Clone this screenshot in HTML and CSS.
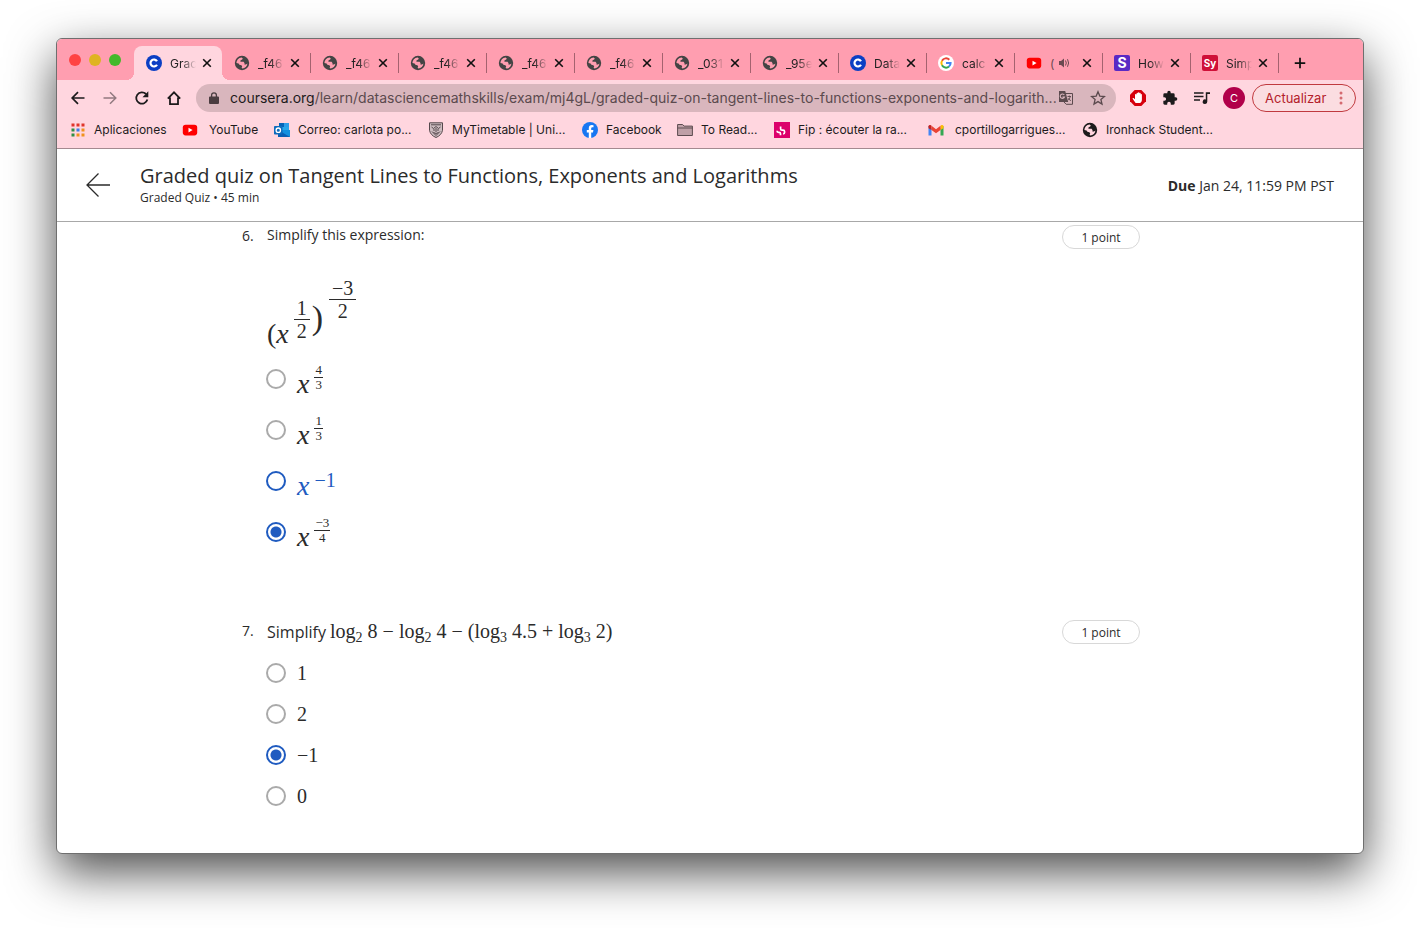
FILE: index.html
```html
<!DOCTYPE html>
<html lang="en">
<head>
<meta charset="utf-8">
<title>Graded quiz on Tangent Lines</title>
<link rel="stylesheet" href="styles.css">
</head>
<body>
<svg class="sprite" aria-hidden="true">
  <symbol id="globe" viewBox="0 0 16 16"><circle cx="8" cy="8" r="7.2" fill="currentColor"/><path d="M2.400 8C2.500 5 4.600 2.700 7.600 2.400L8.800 3.400 8.200 4.600 6.600 5.200 6.400 6.800H9.600L10.600 8.200 10.400 9.400 12 9.600 13.400 8.600C13.200 11.400 11 13.500 8.400 13.600L7.600 12.800 8.200 11.400 7.400 10.200 5.400 9.800 4.600 8.600z" fill="var(--hole)"/></symbol>
  <symbol id="coursera" viewBox="0 0 16 16"><circle cx="8" cy="8" r="8" fill="#0b3fc4"/><path d="M11 6.200A3.500 3.500 0 1 0 11 9.800" fill="none" stroke="#fff" stroke-width="2.200"/></symbol>
  <symbol id="youtube" viewBox="0 0 16 16"><rect x=".8" y="2.800" width="14.400" height="10.600" rx="2.800" fill="#f00"/><path d="M6.500 5.700v4.800L10.600 8.100z" fill="#fff"/></symbol>
  <symbol id="close" viewBox="0 0 16 16"><path d="M4.200 4.200l7.600 7.600M11.800 4.200l-7.600 7.600" stroke="currentColor" stroke-width="1.600"/></symbol>
</svg>
<div class="window">
  <div class="tabstrip">
    <div class="lights"><button class="light red" aria-label="Close window"></button><button class="light yellow" aria-label="Minimize"></button><button class="light green" aria-label="Zoom"></button></div>
    <div class="tab active"><svg class="ico"><use href="#coursera"/></svg><span class="label">Grac</span><button class="x" aria-label="Close tab"><svg class="ico"><use href="#close"/></svg></button></div>
    <div class="tab"><svg class="ico"><use href="#globe"/></svg><span class="label">_f46</span><button class="x" aria-label="Close tab"><svg class="ico"><use href="#close"/></svg></button></div>
    <div class="tab"><svg class="ico"><use href="#globe"/></svg><span class="label">_f46</span><button class="x" aria-label="Close tab"><svg class="ico"><use href="#close"/></svg></button></div>
    <div class="tab"><svg class="ico"><use href="#globe"/></svg><span class="label">_f46</span><button class="x" aria-label="Close tab"><svg class="ico"><use href="#close"/></svg></button></div>
    <div class="tab"><svg class="ico"><use href="#globe"/></svg><span class="label">_f46</span><button class="x" aria-label="Close tab"><svg class="ico"><use href="#close"/></svg></button></div>
    <div class="tab"><svg class="ico"><use href="#globe"/></svg><span class="label">_f46</span><button class="x" aria-label="Close tab"><svg class="ico"><use href="#close"/></svg></button></div>
    <div class="tab"><svg class="ico"><use href="#globe"/></svg><span class="label">_031</span><button class="x" aria-label="Close tab"><svg class="ico"><use href="#close"/></svg></button></div>
    <div class="tab"><svg class="ico"><use href="#globe"/></svg><span class="label">_95e</span><button class="x" aria-label="Close tab"><svg class="ico"><use href="#close"/></svg></button></div>
    <div class="tab"><svg class="ico"><use href="#coursera"/></svg><span class="label">Data</span><button class="x" aria-label="Close tab"><svg class="ico"><use href="#close"/></svg></button></div>
    <div class="tab"><svg class="ico" viewBox="0 0 16 16"><circle cx="8" cy="8" r="8" fill="#fff"/><g fill="none" stroke-width="2"><path d="M11.300 4.700A4.600 4.600 0 0 0 4 5.700" stroke="#ea4335"/><path d="M4 5.700a4.600 4.600 0 0 0 0 4.600" stroke="#fbbc05"/><path d="M4 10.300a4.600 4.600 0 0 0 7 1.200" stroke="#34a853"/><path d="M11 11.500A4.500 4.500 0 0 0 12.600 8H8" stroke="#4285f4"/></g></svg><span class="label">calc</span><button class="x" aria-label="Close tab"><svg class="ico"><use href="#close"/></svg></button></div>
    <div class="tab"><svg class="ico"><use href="#youtube"/></svg><span class="label audible"><span>(</span><svg class="sound" viewBox="0 0 12 12" fill="currentColor"><path d="M1 4h2l3-2.600v9.200L3 8H1z"/><path d="M7.500 3.500q1.600 2.500 0 5M9.500 2.200q2.200 3.800 0 7.600" fill="none" stroke="currentColor"/></svg></span><button class="x" aria-label="Close tab"><svg class="ico"><use href="#close"/></svg></button></div>
    <div class="tab"><span class="ico badge purple">S</span><span class="label">How</span><button class="x" aria-label="Close tab"><svg class="ico"><use href="#close"/></svg></button></div>
    <div class="tab"><span class="ico badge crimson">Sy</span><span class="label">Simp</span><button class="x" aria-label="Close tab"><svg class="ico"><use href="#close"/></svg></button></div>
    <button class="newtab" aria-label="New tab"><svg class="ico" viewBox="0 0 16 16"><path d="M8 2v12M2 8h12" stroke="currentColor" stroke-width="2"/></svg></button>
  </div>

  <div class="toolbar">
    <button class="tool" aria-label="Back"><svg class="ico" viewBox="0 0 16 16"><path d="M14.500 8H2.500M8 2.200L2.200 8 8 13.800" fill="none" stroke="currentColor" stroke-width="1.700"/></svg></button>
    <button class="tool dim" aria-label="Forward"><svg class="ico" viewBox="0 0 16 16"><path d="M1.500 8h12M8 2.200L13.800 8 8 13.800" fill="none" stroke="currentColor" stroke-width="1.500"/></svg></button>
    <button class="tool" aria-label="Reload"><svg class="ico" viewBox="0 0 16 16"><path d="M13.400 9.600A5.700 5.700 0 1 1 12 4" fill="none" stroke="currentColor" stroke-width="1.800"/><path d="M14.300 1.200v6H8.500z" fill="currentColor"/></svg></button>
    <button class="tool" aria-label="Home"><svg class="ico" viewBox="0 0 16 16"><path d="M1.800 8.600L8 2.300l6.200 6.300M4 7.500v6.600h8V7.500" fill="none" stroke="currentColor" stroke-width="1.800"/></svg></button>
    <label class="omnibox">
      <svg class="lock" viewBox="0 0 10 12"><path d="M1 4.500h8a1 1 0 0 1 1 1V11a1 1 0 0 1-1 1H1a1 1 0 0 1-1-1V5.500a1 1 0 0 1 1-1z" fill="currentColor"/><path d="M2.600 5V3.200a2.400 2.400 0 0 1 4.800 0V5" fill="none" stroke="currentColor" stroke-width="1.300"/></svg>
      <span class="host">coursera.org</span>
      <input class="path" type="text" aria-label="Address" value="/learn/datasciencemathskills/exam/mj4gL/graded-quiz-on-tangent-lines-to-functions-exponents-and-logarith...">
      <button class="tool" aria-label="Translate"><svg class="ico" viewBox="0 0 16 16"><path d="M7 3.500h7.500v10.800H8.200L6 12" fill="none" stroke="currentColor"/><path d="M1 1h6.200l3 11H1z" fill="currentColor"/><path d="M6.300 5A2.200 2.200 0 1 0 6.500 7H4.500" fill="none" stroke="var(--url)" stroke-width="1.100"/><path d="M9.500 6.500H13M11.300 5.500v1M12.300 6.500q-.3 2-2.300 3.800M10.500 8l2.200 3" stroke="currentColor" fill="none" stroke-width=".9"/></svg></button>
      <button class="tool" aria-label="Bookmark"><svg class="ico" viewBox="0 0 16 16"><path d="M8 1.800l1.800 4.300 4.700.4-3.600 3 1.100 4.600L8 11.600l-4 2.500 1.100-4.600-3.600-3 4.700-.4z" fill="none" stroke="currentColor" stroke-width="1.300"/></svg></button>
    </label>
    <button class="tool" aria-label="Ad blocker"><svg class="ico" viewBox="0 0 16 16"><path d="M4.700 0h6.600L16 4.700v6.600L11.300 16H4.700L0 11.300V4.700z" fill="#d6000d"/><path d="M5 4.500v4.800L3.800 8.200c-.8-.5-1.500.2-1 .9L5.600 13h4.600c1.300-1 1.700-2 1.700-3.500V4.500c0-.8-1.200-.8-1.200 0V3.400c0-.8-1.300-.8-1.300 0v-.6c0-.8-1.400-.8-1.400 0v.6c0-.8-1.400-.8-1.400 0v1.100c0-.8-1.600-.8-1.600 0z" fill="#fff"/></svg></button>
    <button class="tool" aria-label="Extensions"><svg class="ico" viewBox="0 0 24 24"><path d="M20.500 11H19V7a2 2 0 0 0-2-2h-4V3.500a2.500 2.500 0 0 0-5 0V5H4a2 2 0 0 0-2 2v3.800h1.500a2.700 2.700 0 0 1 0 5.400H2V20c0 1.100.9 2 2 2h3.800v-1.500a2.700 2.700 0 0 1 5.400 0V22H17a2 2 0 0 0 2-2v-4h1.500a2.500 2.500 0 0 0 0-5z" fill="currentColor"/></svg></button>
    <button class="tool" aria-label="Media"><svg class="ico" viewBox="0 0 16 16"><path d="M0 3h9.500M0 6.500h9.500M0 10h6" stroke="currentColor" stroke-width="1.500"/><path d="M16 2.200h-4.200v7.300a2.300 2.300 0 1 0 1.500 2.100V4H16z" fill="currentColor"/></svg></button>
    <button class="tool" aria-label="Profile"><span class="avatar">C</span></button>
    <button class="update">Actualizar<svg class="dots" viewBox="0 0 4 14"><circle cx="2" cy="2" r="1.500"/><circle cx="2" cy="7" r="1.500"/><circle cx="2" cy="12" r="1.500"/></svg></button>
  </div>

  <nav class="bookmarks">
    <a href="#"><svg class="ico" viewBox="0 0 16 16"><path d="M1.500 1.500h3v3h-3zM6.500 1.500h3v3h-3zM11.500 1.500h3v3h-3z" fill="#e0352b"/><path d="M1.500 6.500h3v3h-3z" fill="#2f8f46"/><path d="M6.500 6.500h3v3h-3z" fill="#3d7de8"/><path d="M11.500 6.500h3v3h-3zM11.500 11.500h3v3h-3zM6.500 11.500h3v3h-3z" fill="#f0921e"/><path d="M1.500 11.500h3v3h-3z" fill="#2f8f46"/></svg>Aplicaciones</a>
    <a href="#" class="wide"><svg class="ico"><use href="#youtube"/></svg>YouTube</a>
    <a href="#"><svg class="ico" viewBox="0 0 16 16"><path d="M5 1h10v9H5z" fill="#28a8ea"/><path d="M5 1h5v4H5z" fill="#0364b8"/><path d="M10 1h5v4h-5z" fill="#2b9ee8"/><path d="M4 8l12 0v7H4z" fill="#1490df"/><path d="M4 8l12 7H4z" fill="#0a5fb5"/><rect y="4" width="8.500" height="8.500" rx=".8" fill="#0f6cbd"/><circle cx="4.300" cy="8.200" r="2.200" fill="none" stroke="#fff" stroke-width="1.300"/></svg>Correo: carlota po...</a>
    <a href="#"><svg class="ico" viewBox="0 0 16 16"><path d="M1.500.8h13v7.500q-1 5-6.500 7.200Q2.500 13.300 1.500 8.300z" fill="#cdbcc0" stroke="#55484c"/><path d="M3 2.800h10M3.500 5l2 1.500L8 4.500l2.500 2 2-1.500M5 8h2M9 8h2M5.500 10.500q2.500 2 5 0M8 6v4M4 9.500l4 4 4-4" fill="none" stroke="#55484c"/></svg>MyTimetable | Uni...</a>
    <a href="#"><svg class="ico" viewBox="0 0 16 16"><circle cx="8" cy="8" r="8" fill="#1877f2"/><path d="M6.800 16v-5.600h-2V8h2V6.300c0-2 1.200-3.200 3-3.200l1.700.2v2h-1c-1 0-1.300.6-1.300 1.200V8h2.200l-.4 2.400H9.200V16z" fill="#fff"/></svg>Facebook</a>
    <a href="#"><svg class="ico" viewBox="0 0 16 16"><path d="M.6 13.500v-11h5l1.500 1.600h8.300v9.400z" fill="#bfa0a7" stroke="#5c4c50"/><path d="M.6 6h14.800" stroke="#5c4c50"/></svg>To Read...</a>
    <a href="#"><svg class="ico" viewBox="0 0 16 16"><path d="M0 0h16v16H0z" fill="#dc006b"/><path d="M6.600 4.500v2.200q0 1.500 1.500 1.500h1q1.500 0 1.500 1.500v.6q0 1.500-1.500 1.500M3 8.800q0 1.600 1.500 1.600h.6q1.400 0 1.400 1.400v1.500" fill="none" stroke="#fff" stroke-width="1.700"/></svg>Fip : écouter la ra...</a>
    <a href="#" class="wide"><svg class="ico" viewBox="0 0 16 16"><path d="M.5 4v9.500h3V6z" fill="#4285f4"/><path d="M15.500 4v9.500h-3V6z" fill="#34a853"/><path d="M.5 4.200v2L3.500 8V3.800L2.500 3Q.7 2.700.5 4.200z" fill="#c5221f"/><path d="M15.500 4.200v2l-3 1.800V3.800l1-.8q1.800-.3 2 1.200z" fill="#fbbc04"/><path d="M3.500 3.800L8 7.200l4.500-3.400V8L8 11.200 3.500 8z" fill="#ea4335"/></svg>cportillogarrigues...</a>
    <a href="#"><svg class="ico"><use href="#globe"/></svg>Ironhack Student...</a>
  </nav>

  <header class="quizbar">
    <a class="backlink" href="#" aria-label="Back to course"><svg viewBox="0 0 24 24"><path d="M24 12H1M12.500.5L1 12l11.500 11.500" fill="none" stroke="currentColor" stroke-width="1.300"/></svg></a>
    <div class="heading"><h1>Graded quiz on Tangent Lines to Functions, Exponents and Logarithms</h1><p>Graded Quiz • 45 min</p></div>
    <p class="due"><strong>Due</strong> Jan 24, 11:59 PM PST</p>
  </header>

  <main class="quiz">
    <section class="question">
      <span class="num">6.</span>
      <div class="body">
        <p class="prompt">Simplify this expression:</p>
        <div class="expr">
          <span class="paren">(</span><i class="var">x</i><span class="power low"><span class="frac"><span>1</span><span>2</span></span></span><span class="bigparen">)</span><span class="power high"><span class="frac"><span>−3</span><span>2</span></span></span>
        </div>
        <div class="options tall">
          <label><input type="radio" name="q6"><span class="pow"><i class="var">x</i><span class="frac small"><span>4</span><span>3</span></span></span></label>
          <label><input type="radio" name="q6"><span class="pow"><i class="var">x</i><span class="frac small"><span>1</span><span>3</span></span></span></label>
          <label class="focus"><input type="radio" name="q6"><span class="pow"><i class="var">x</i><span class="exp">−1</span></span></label>
          <label><input type="radio" name="q6" checked><span class="pow"><i class="var">x</i><span class="frac small"><span>−3</span><span>4</span></span></span></label>
        </div>
      </div>
      <span class="points">1 point</span>
    </section>
    <section class="question">
      <span class="num">7.</span>
      <div class="body">
        <p class="prompt large">Simplify <span class="math">log<sub>2</sub> 8 − log<sub>2</sub> 4 − (log<sub>3</sub> 4.5 + log<sub>3</sub> 2)</span></p>
        <div class="options">
          <label><input type="radio" name="q7"><span class="math">1</span></label>
          <label><input type="radio" name="q7"><span class="math">2</span></label>
          <label><input type="radio" name="q7" checked><span class="math">−1</span></label>
          <label><input type="radio" name="q7"><span class="math">0</span></label>
        </div>
      </div>
      <span class="points">1 point</span>
    </section>
  </main>
</div>
</body>
</html>
```
FILE: styles.css
```css
* { box-sizing: border-box; }
:root { --strip: #ff9eb0; --bar: #ffd6df; --url: #d9b6bd; --blue: #1f5bc0; }
body { margin: 0; min-height: 100vh; padding: 38px 56px 74px; display: flex; flex-direction: column; background: #fff; font-family: Inter, "Liberation Sans", sans-serif; }
button { border: 0; padding: 0; margin: 0; background: none; color: inherit; font: inherit; }
p, h1 { margin: 0; }
.sprite { display: none; }
.ico { display: block; width: 16px; height: 16px; flex: none; }

.window { flex: 1; border: 1px solid #6f6f6f; border-radius: 6px; overflow: hidden; background: #fff; box-shadow: 0 18px 48px rgba(0,0,0,.7); }

.tabstrip { display: flex; align-items: flex-end; height: 41px; background: var(--strip); color: #111; --hole: var(--strip); }
.lights { display: flex; gap: 8px; width: 77px; height: 41px; padding: 0 0 0 12px; align-items: center; }
.light { width: 12px; height: 12px; border-radius: 50%; }
.red { background: #ff4343; }
.yellow { background: #dfb423; }
.green { background: #43b929; }
.tab { position: relative; display: flex; align-items: center; width: 88px; height: 34px; padding-left: 12px; color: #444; font-size: 12px; }
.tab + .tab:not(.active)::after { content: ""; position: absolute; right: -1px; top: 7px; width: 1px; height: 20px; background: #a5626f; }
.tab.active { background: var(--bar); border-radius: 8px 8px 0 0; }
.tab.active::before, .tab.active::after { content: ""; position: absolute; bottom: 0; width: 8px; height: 8px; }
.tab.active::before { left: -8px; background: radial-gradient(circle at 0 0, transparent 8px, var(--bar) 8px); }
.tab.active::after { right: -8px; background: radial-gradient(circle at 100% 0, transparent 8px, var(--bar) 8px); }
.label { width: 29px; margin-left: 8px; overflow: hidden; white-space: nowrap; color: #222; -webkit-mask-image: linear-gradient(90deg, #000 12px, transparent 26px); mask-image: linear-gradient(90deg, #000 12px, transparent 26px); }
.label.audible { display: flex; align-items: center; gap: 4px; -webkit-mask-image: none; mask-image: none; color: #6b4a51; }
.sound { width: 12px; height: 12px; }
.x { color: #111; }
.badge { border-radius: 2px; color: #fff; font-weight: 700; text-align: center; line-height: 16px; }
.purple { background: #5a2ac4; font-size: 14px; }
.crimson { background: #cf1038; font-size: 10px; }
.newtab { width: 44px; height: 34px; display: grid; place-items: center; }
.newtab .ico { width: 14px; height: 14px; }

.toolbar { display: flex; align-items: center; height: 35px; padding: 0 7px 0 5px; background: var(--bar); color: #1d1b1c; }
.tool { width: 32px; height: 28px; display: grid; place-items: center; flex: none; }
.dim { color: #927a80; }
.omnibox { flex: 1; display: flex; align-items: center; min-width: 0; height: 28px; margin: 0 6px; padding: 0 8px 0 13px; border-radius: 14px; background: var(--url); color: #5b4a4e; font-size: 14px; }
.omnibox .tool { width: 20px; color: #5b4a4e; }
.omnibox .tool + .tool { margin-left: 12px; }
.lock { width: 10px; height: 12px; margin-right: 11px; color: #4b3d41; }
.host { color: #1d1b1c; }
.path { flex: 1; min-width: 0; padding: 0; border: 0; outline: 0; background: none; color: inherit; font: inherit; }
.avatar { width: 22px; height: 22px; border-radius: 50%; background: #b1004a; color: #fff; font-size: 11px; line-height: 22px; text-align: center; }
.update { display: flex; align-items: center; justify-content: space-between; width: 104px; height: 28px; margin-left: 2px; padding: 0 12px; border: 1px solid #c03a3f; border-radius: 14px; background: #fbdde1; color: #b3202a; font-size: 13px; }
.dots { width: 4px; height: 14px; fill: #d56a70; }

.bookmarks { display: grid; grid-template-columns: 112px 92px 154px 154px 95px 97px 154px 154px auto; align-items: center; height: 34px; padding: 0 0 4px 13px; border-bottom: 1px solid #a58a90; background: var(--bar); --hole: var(--bar); }
.bookmarks a { display: flex; align-items: center; gap: 8px; color: #1d1b1c; font-size: 12px; text-decoration: none; white-space: nowrap; }
.bookmarks a.wide { gap: 11px; }

.quizbar { display: flex; align-items: center; height: 73px; padding: 0 29px; border-bottom: 1px solid #a8a8a8; color: #2b2b2b; font-family: "Open Sans", sans-serif; }
.backlink { width: 24px; height: 24px; margin-right: 30px; color: #2b2b2b; }
.backlink svg { display: block; }
.heading { flex: 1; }
h1 { font-size: 20px; font-weight: 400; line-height: 26px; }
.heading p { font-size: 12px; line-height: 18px; }
.due { font-size: 14px; }

.quiz { padding: 0 223px 32px 185px; color: #2b2b2b; font-family: "Open Sans", sans-serif; }
.question { display: grid; grid-template-columns: 25px 1fr 78px; align-items: start; margin-bottom: 60px; }
.question:last-child { margin-bottom: 0; }
.num, .prompt { font-size: 14px; line-height: 26px; }
.num { padding-top: 1px; }
.points { height: 24px; margin-top: 3px; border: 1px solid #d8d8d8; border-radius: 12px; font-size: 12px; line-height: 24px; text-align: center; }
.prompt.large { padding-top: 1px; font-size: 16px; }
.math, .expr, .pow { font-family: "Liberation Serif", serif; }
.math { font-size: 20px; }
.math sub { font-size: 14px; line-height: 1; vertical-align: -4px; }
.expr { display: flex; align-items: flex-end; height: 72px; margin-top: 29px; }
.paren, .var { font-size: 28px; line-height: 26px; }
.expr .paren, .expr .var { padding-bottom: 2px; }
.bigparen { padding-bottom: 14px; font-size: 34px; line-height: 34px; }
.frac { display: inline-flex; flex-direction: column; align-items: stretch; text-align: center; font-size: 20px; line-height: 22px; }
.frac span { padding: 0 3px; }
.frac span:first-child { border-bottom: 1px solid currentColor; }
.power.low { padding: 0 2px 7px 5px; }
.power.high { padding: 0 6px 27px; }
.frac.small { padding-bottom: 5px; font-size: 13px; line-height: 14px; }
.frac.small span { padding: 0 1px; }
.options { padding-top: 7px; }
.options label { display: flex; align-items: center; gap: 11px; height: 41px; }
.options.tall { padding-top: 4px; }
.options.tall label { height: 51px; }
.options input { appearance: none; width: 20px; height: 20px; margin: 0 0 0 -1px; border: 2px solid #aaa; border-radius: 50%; background: #fff; }
.options input:checked, .options .focus input { border-color: var(--blue); }
.options input:checked { background: radial-gradient(circle, var(--blue) 5px, #fff 6px); }
.options .math { padding-top: 2px; }
.focus { color: var(--blue); }
.pow { display: flex; align-items: flex-end; gap: 5px; height: 37px; }
.exp { padding-bottom: 9px; font-size: 20px; line-height: 20px; }
```
